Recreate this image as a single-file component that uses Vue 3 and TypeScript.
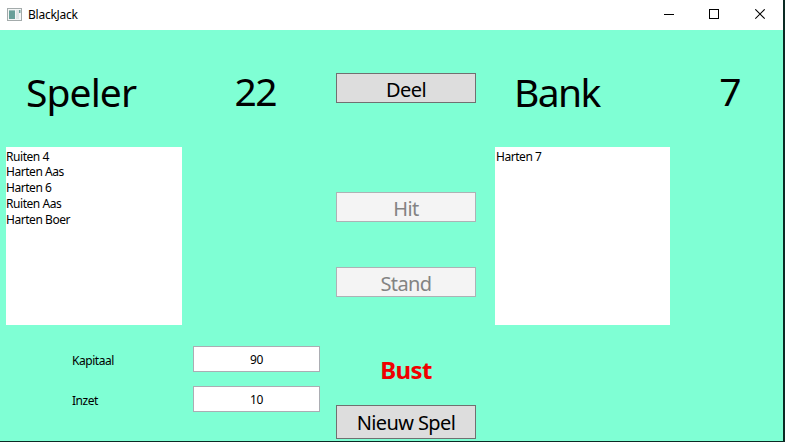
<script setup lang="ts">
import { ref } from 'vue'

interface Hand {
  name: string
  score: number
  cards: string[]
}

const player = ref<Hand>({
  name: 'Speler',
  score: 22,
  cards: ['Ruiten 4', 'Harten Aas', 'Harten 6', 'Ruiten Aas', 'Harten Boer'],
})
const bank = ref<Hand>({ name: 'Bank', score: 7, cards: ['Harten 7'] })
const capital = ref('90')
const bet = ref('10')
const result = ref('Bust')
</script>

<template>
  <div class="desktop">
    <div class="window">
      <header class="titlebar">
        <svg class="app-icon" width="15" height="13" viewBox="0 0 15 13">
          <rect x="0.5" y="0.5" width="14" height="12" fill="#f4f6f6" stroke="#a3abab" />
          <rect x="2" y="2" width="6" height="9" fill="#699f99" />
          <rect x="2" y="2" width="6" height="1" fill="#9fbfbb" />
          <rect x="9" y="2" width="3" height="9" fill="#dfe5e5" />
          <rect x="12" y="2" width="1.5" height="3" fill="#72a39d" />
        </svg>
        <span class="title">BlackJack</span>
        <div class="controls">
          <svg width="11" height="11" viewBox="0 0 11 11"><path d="M0 5.5H10" stroke="#000" /></svg>
          <svg width="11" height="11" viewBox="0 0 11 11"><rect x="0.5" y="0.5" width="9" height="9" fill="none" stroke="#000" /></svg>
          <svg width="11" height="11" viewBox="0 0 11 11"><path d="M0.3 0.3L9.7 9.7M9.7 0.3L0.3 9.7" stroke="#000" stroke-width="1.1" /></svg>
        </div>
      </header>

      <main class="table">
        <section class="player">
          <div class="heading">
            <span class="name">{{ player.name }}</span>
            <span class="score">{{ player.score }}</span>
          </div>
          <ul class="cards">
            <li v-for="card in player.cards" :key="card">{{ card }}</li>
          </ul>
          <div class="fields">
            <label for="capital">Kapitaal</label>
            <input id="capital" v-model="capital" type="text" />
            <label for="bet">Inzet</label>
            <input id="bet" v-model="bet" type="text" />
          </div>
        </section>

        <section class="actions">
          <button class="deal">Deel</button>
          <button class="hit" disabled>Hit</button>
          <button class="stand" disabled>Stand</button>
          <div class="result">{{ result }}</div>
          <button class="new-game">Nieuw Spel</button>
        </section>

        <section class="bank">
          <div class="heading">
            <span class="name">{{ bank.name }}</span>
            <span class="score">{{ bank.score }}</span>
          </div>
          <ul class="cards">
            <li v-for="card in bank.cards" :key="card">{{ card }}</li>
          </ul>
        </section>
      </main>
    </div>
  </div>
</template>

<style>
body {
  margin: 0;
}
</style>

<style scoped>
* {
  box-sizing: border-box;
}
.desktop {
  width: 785px;
  height: 442px;
  padding: 0 2px 1px 0;
  background: #0c2a24;
  overflow: hidden;
  font-family: 'Noto Sans', 'Open Sans', sans-serif;
  font-size: 12px;
  color: #000;
}
.window {
  height: 441px;
  background: #7fffd4;
}
.titlebar {
  height: 30px;
  display: flex;
  align-items: center;
  padding: 0 17px 2px 7px;
  background: #fff;
}
.title {
  margin-left: 6px;
  padding-top: 1px;
  letter-spacing: -0.25px;
}
.controls {
  margin-left: auto;
  display: flex;
  gap: 34px;
}
.controls svg {
  display: block;
}
.controls svg:last-child {
  margin-left: 1px;
}
.table {
  display: grid;
  grid-template-columns: 336px 140px 1fr;
  height: 411px;
}
.heading {
  display: flex;
  justify-content: space-between;
  height: 117px;
  padding-top: 35px;
  font-size: 39px;
  line-height: 54px;
}
.player .heading {
  padding-left: 26px;
  padding-right: 60px;
}
.bank .heading {
  padding-left: 19px;
  padding-right: 43px;
}
.name {
  letter-spacing: -0.9px;
}
.bank .name {
  letter-spacing: -1.6px;
}
.score {
  line-height: 52px;
  letter-spacing: -1.5px;
}
.cards {
  list-style: none;
  margin: 0 0 0 6px;
  padding: 1.5px 0 0;
  width: 176px;
  height: 178px;
  background: #fff;
  line-height: 15.75px;
  letter-spacing: -0.45px;
}
.bank .cards {
  margin-left: 0;
  padding-left: 1px;
  width: 175px;
}
.fields {
  display: grid;
  grid-template-columns: 121px 127px;
  row-gap: 14px;
  margin: 21px 0 0 72px;
}
.fields label {
  line-height: 28px;
  height: 26px;
  padding-top: 1px;
  letter-spacing: -0.45px;
}
.fields input {
  width: 127px;
  height: 26px;
  margin: 0;
  padding: 0;
  border: 1px solid #abadb3;
  border-radius: 0;
  background: #fff;
  color: #000;
  font: inherit;
  letter-spacing: -0.3px;
  text-align: center;
  outline: none;
}
.actions {
  display: flex;
  flex-direction: column;
  padding-top: 43px;
}
.actions button {
  flex: none;
  height: 30px;
  padding: 3px 0 0;
  border: 1px solid #707070;
  border-radius: 0;
  background: #ddd;
  color: #000;
  font-family: inherit;
  font-size: 20px;
  line-height: 25px;
  text-align: center;
  letter-spacing: -0.6px;
}
.actions button:disabled {
  border-color: #adb2b5;
  background: #f4f4f4;
  color: #838383;
}
.actions .hit {
  margin-top: 89px;
}
.actions .stand {
  margin-top: 45px;
}
.result {
  margin-top: 57px;
  height: 51px;
  color: #f00000;
  font-size: 24px;
  font-weight: 700;
  line-height: 32px;
  text-align: center;
  letter-spacing: -0.6px;
}
.actions .new-game {
  height: 34px;
  padding-top: 1px;
}
.bank {
  padding-left: 19px;
}
</style>
